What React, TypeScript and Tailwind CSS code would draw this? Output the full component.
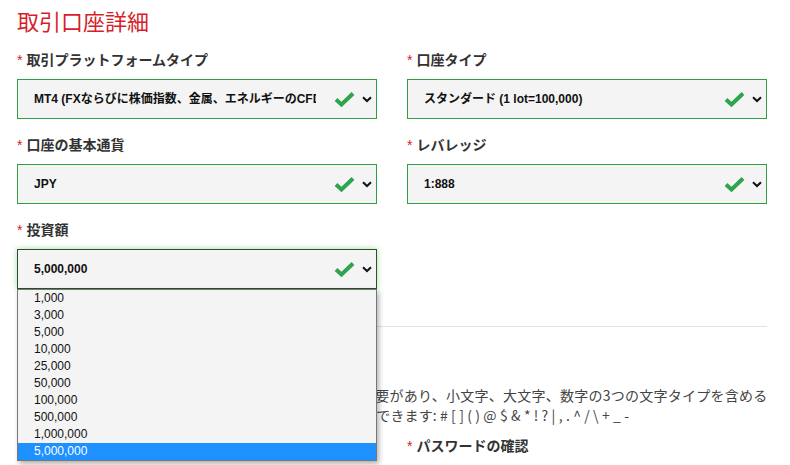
import React from "react"

const font = "font-['Liberation_Sans','Noto_Sans_CJK_JP',sans-serif]"

const Check = () => (
    <svg width="21" height="16" viewBox="0 0 21 16" className="shrink-0">
        <path d="M2 8.5 L7.5 13.5 L19 2.5" fill="none" stroke="#2ea44f" strokeWidth="4" strokeLinecap="butt" strokeLinejoin="miter" />
    </svg>
)

const Chevron = () => (
    <svg width="10" height="7" viewBox="0 0 10 7" className="shrink-0">
        <path d="M1 1.2 L5 5 L9 1.2" fill="none" stroke="#111" strokeWidth="2" />
    </svg>
)

interface FieldProps {
    label: string
    value: string
    focused?: boolean
    children?: React.ReactNode
}

const Label = ({ text }: { text: string }) => (
    <div className="h-[20px] leading-[20px] text-[14px] font-bold text-[#333] flex items-center">
        <span className="text-[#d0202e] mr-[4px] font-normal">*</span>
        {text}
    </div>
)

const Field: React.FC<FieldProps> = ({ label, value, focused, children }) => {
    return (
        <div className="relative w-[360px]">
            <Label text={label} />
            <div
                className={
                    focused
                        ? "mt-[9px] h-[40px] bg-[#f4f4f4] border border-[#2c4f2c] shadow-[0_0_6px_rgba(60,170,60,0.45)] flex items-center pl-[16px] pr-[4px]"
                        : "mt-[9px] h-[40px] bg-[#f4f4f4] border border-[#2ea043] flex items-center pl-[16px] pr-[4px]"
                }
            >
                <div className="flex-1 overflow-hidden whitespace-nowrap text-[12px] font-bold text-[#111] mr-[18px]">{value}</div>
                <Check />
                <div className="w-[7px]" />
                <Chevron />
            </div>
            {children}
        </div>
    )
}

const amounts = ["1,000", "3,000", "5,000", "10,000", "25,000", "50,000", "100,000", "500,000", "1,000,000", "5,000,000"]

export default function App() {
    return (
        <div className={`w-[790px] h-[465px] overflow-hidden bg-white ${font}`}>
            <div className="pl-[17px] w-[767px]">
                <h2 className="mt-[8px] h-[30px] leading-[30px] text-[22px] text-[#d61f2b]">取引口座詳細</h2>

                <div className="mt-[12px] flex gap-[30px]">
                    <Field label="取引プラットフォームタイプ" value="MT4 (FXならびに株価指数、金属、エネルギーのCFD)" />
                    <Field label="口座タイプ" value="スタンダード (1 lot=100,000)" />
                </div>

                <div className="mt-[16px] flex gap-[30px]">
                    <Field label="口座の基本通貨" value="JPY" />
                    <Field label="レバレッジ" value="1:888" />
                </div>

                <div className="mt-[16px] flex gap-[30px] relative z-10">
                    <Field label="投資額" value="5,000,000" focused>
                        <div className="absolute left-0 top-[69px] w-[360px] bg-[#f4f4f4] border border-[#777] shadow-[2px_3px_5px_rgba(0,0,0,0.3)]">
                            {amounts.map((a) => (
                                <div
                                    key={a}
                                    className={
                                        a === "5,000,000"
                                            ? "h-[17px] leading-[17px] pl-[16px] text-[12px] bg-[#1e90ff] text-white"
                                            : "h-[17px] leading-[17px] pl-[16px] text-[12px] text-[#111]"
                                    }
                                >
                                    {a}
                                </div>
                            ))}
                        </div>
                    </Field>
                </div>

                <div className="mt-[37px] border-t border-[#e2e2e2]" />

                <div className="mt-[58px] text-[14px] leading-[20px] text-[#444] whitespace-nowrap font-['Noto_Sans_CJK_JP',sans-serif]">
                    <div className="ml-[7px] tracking-[0.25px]">パスワードは8～15文字の長さで、英数字を使用する必要があり、小文字、大文字、数字の3つの文字タイプを含める</div>
                    <div className="ml-[5px] tracking-[0.1px]">必要があります。また 以下の特殊記号を使用することができます: # [ ] ( ) @ $ & * ! ? | , . ^ / \ + _ -</div>
                </div>

                <div className="mt-[11px] flex gap-[30px]">
                    <div className="w-[360px]">
                        <Label text="パスワード" />
                    </div>
                    <div className="w-[360px]">
                        <Label text="パスワードの確認" />
                    </div>
                </div>
            </div>
        </div>
    )
}
